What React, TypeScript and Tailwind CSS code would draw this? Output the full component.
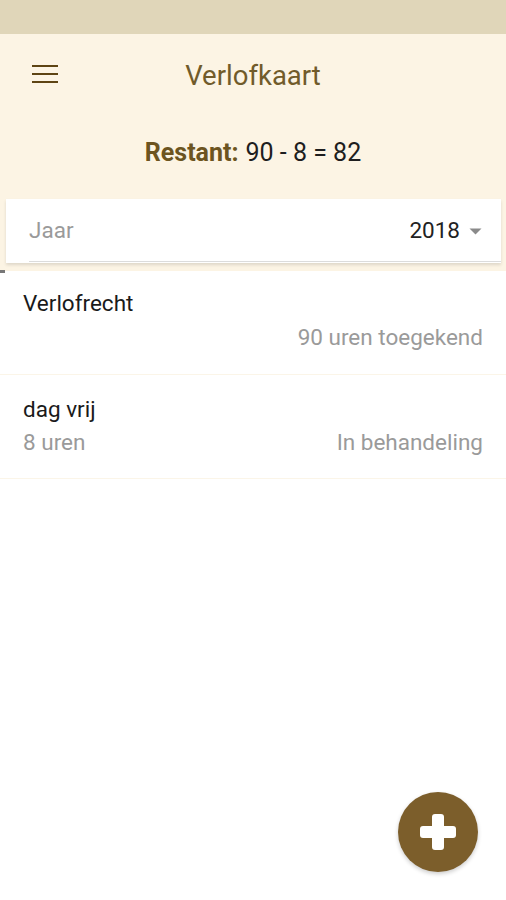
import React from "react";

export default function App() {
  return (
    <div className="w-[506px] h-[900px] bg-white relative overflow-hidden" style={{ fontFamily: "Roboto, 'Noto Sans', sans-serif" }}>
      <div className="h-[34px] bg-[#e0d6b9]" />
      <div className="bg-[#fcf4e4] pb-[8px]">
        <div className="h-[82px] flex items-center relative">
          <div className="absolute left-[32px] top-[31px] flex flex-col gap-[6px]">
            <div className="w-[26px] h-[2px] bg-[#5e4413]" />
            <div className="w-[26px] h-[2px] bg-[#5e4413]" />
            <div className="w-[26px] h-[2px] bg-[#5e4413]" />
          </div>
          <div className="flex-1 text-center text-[27.5px] text-[#715b2a] pt-[1px]">Verlofkaart</div>
        </div>
        <div className="h-[83px] flex items-center justify-center text-[25px] text-[#1e1e1e] pb-[10px]">
          <span className="font-bold text-[#6c5420]">Restant:</span>
          <span className="ml-[7px]">90 - 8 = 82</span>
        </div>
        <div className="ml-[6px] mr-[5px] h-[64px] bg-white relative shadow-[0_2px_3px_rgba(0,0,0,0.12)]">
          <div className="absolute left-[23px] right-0 bottom-[1px] h-[1px] bg-[#dcdcdc]" />
          <div className="flex items-center h-full pl-[23px] pr-[19px]">
            <span className="text-[22.5px] text-[#9a9a9a]">Jaar</span>
            <span className="ml-auto text-[22.5px] text-[#222]">2018</span>
            <svg width="13" height="7" viewBox="0 0 13 7" className="ml-[9px] mt-[1px]">
              <path d="M0.5 0.5 L6.5 6.5 L12.5 0.5 Z" fill="#8a8a8a" />
            </svg>
          </div>
        </div>
      </div>
      <div className="relative">
        <div className="absolute left-0 top-[-1px] w-[5px] h-[3px] bg-[#777]" />
        <div className="h-[104px] border-b border-[#fbf5e8] px-[23px] pt-[18px]">
          <div className="text-[22.5px] text-[#1a1a1a] leading-[28px]">Verlofrecht</div>
          <div className="text-[22.5px] text-[#9a9a9a] text-right mt-[6px] leading-[28px]">90 uren toegekend</div>
        </div>
        <div className="h-[104px] border-b border-[#fbf5e8] px-[23px] pt-[20px]">
          <div className="text-[22.5px] text-[#1a1a1a] leading-[28px]">dag vrij</div>
          <div className="flex justify-between text-[22.5px] text-[#9a9a9a] mt-[5px] leading-[28px]">
            <span>8 uren</span>
            <span>In behandeling</span>
          </div>
        </div>
      </div>
      <div className="absolute left-[398px] top-[792px] w-[80px] h-[80px] rounded-full bg-[#7c5e2b] flex items-center justify-center shadow-[0_2px_4px_rgba(0,0,0,0.2)]">
        <svg width="40" height="40" viewBox="0 0 40 40">
          <rect x="14" y="2" width="12" height="36" rx="3" fill="white" />
          <rect x="2" y="14" width="36" height="12" rx="3" fill="white" />
        </svg>
      </div>
    </div>
  );
}
